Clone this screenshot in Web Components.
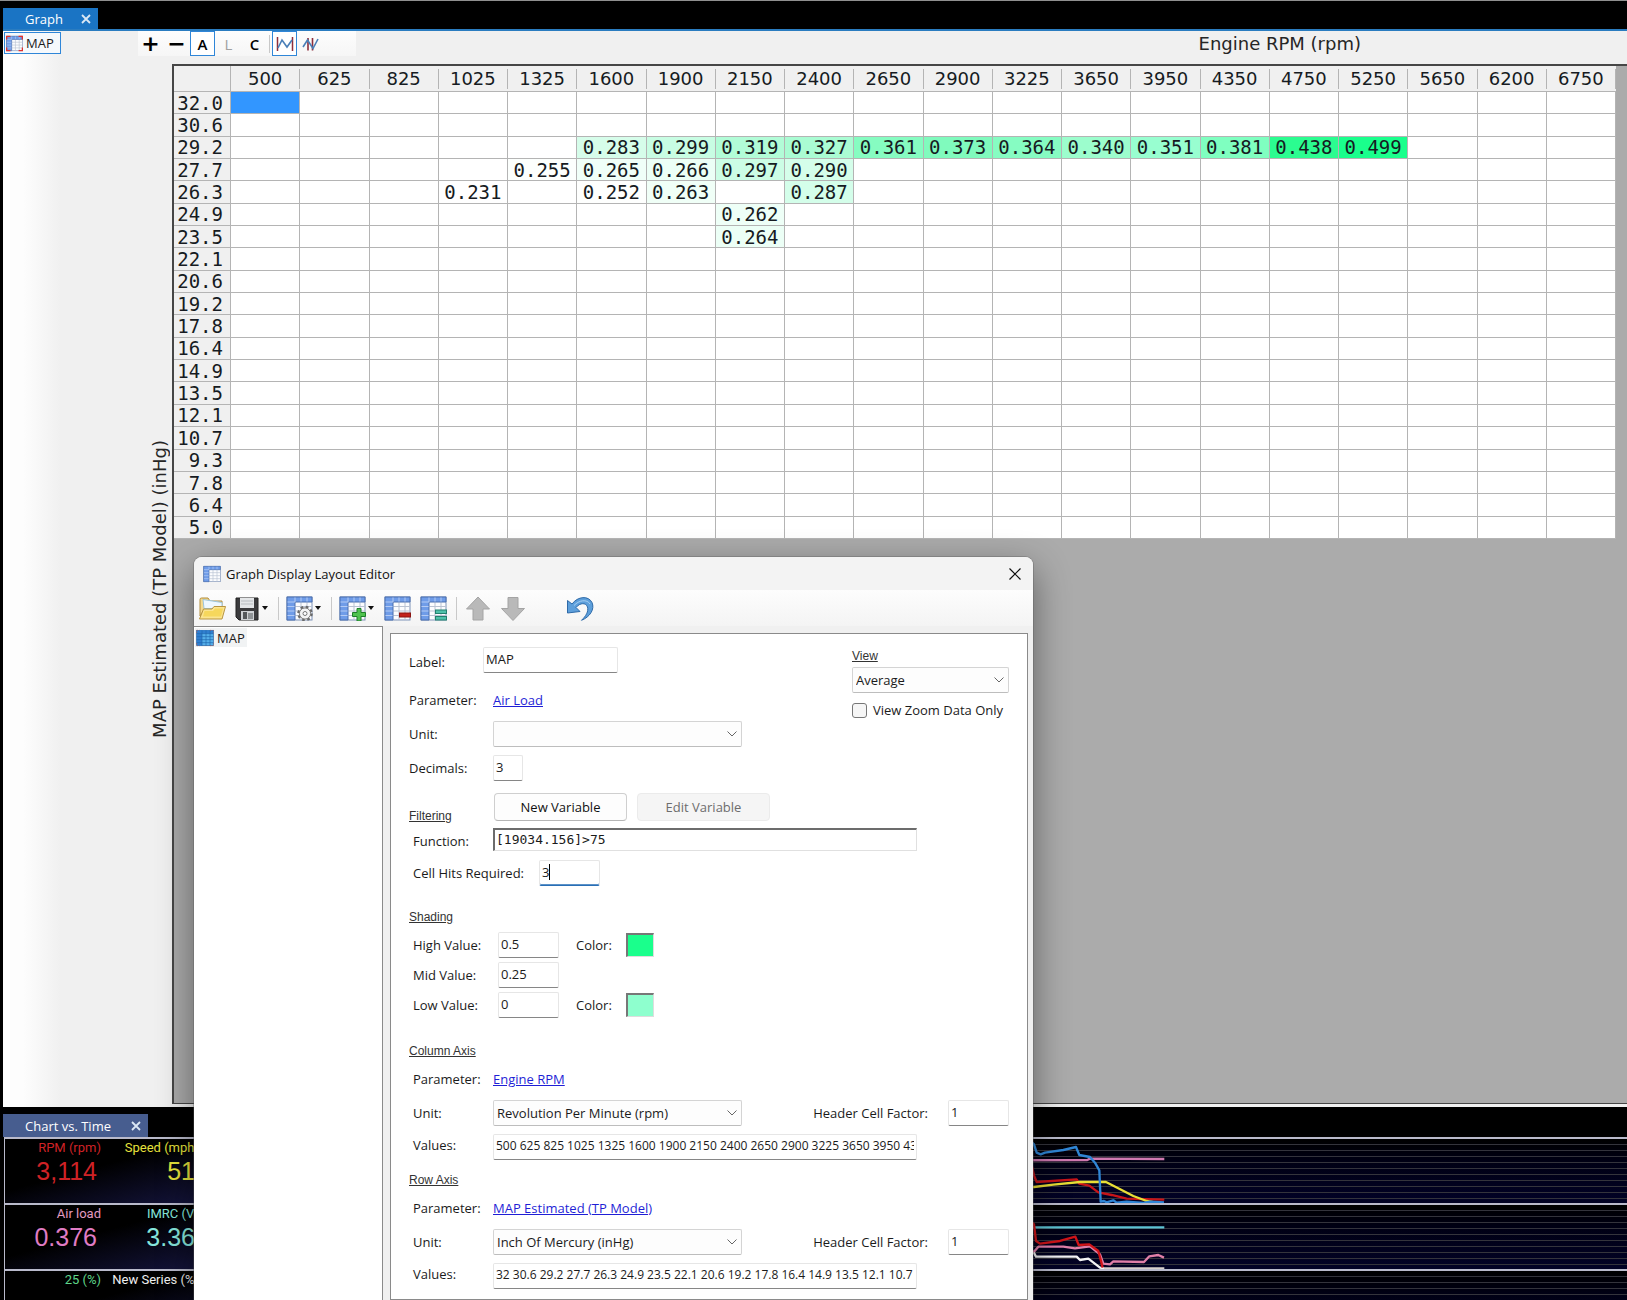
<!DOCTYPE html>
<html lang="en">
<head>
<meta charset="utf-8">
<title>Graph Display Layout Editor</title>
<style>
html, body { margin: 0; height: 100%; background: #000; overflow: hidden; }
body { font: 13px/18px "Open Sans", "Noto Sans", sans-serif; color: #1b1b1b; }
</style>
</head>
<body>
<scanner-app></scanner-app>

<script>
class Base extends HTMLElement {
  constructor() {
    super();
    const t = document.createElement('template');
    t.innerHTML = this.view();
    this.attachShadow({ mode: 'open' }).appendChild(t.content.cloneNode(true));
  }
}

/* ---------- icons ---------- */
const tableBody = `
  <rect x="1" y="1" width="25" height="23" fill="#fbfcfe" stroke="#7f93b8"/>
  <path d="M9.500 10.500H26M9.500 15H26M9.500 19.500H26M15 6.500V24M21 6.500V24" stroke="#b9c2d2" fill="none"/>
  <path d="M1 1h25v5H9v18H1z" fill="#6f9ce8" stroke="#4a6eae"/>
  <path d="M1.500 6H9M1.500 10.500h7M1.500 15h7M1.500 19.500h7M9 1.500V6M15 1.500v4M21 1.500v4" stroke="#b4cbf4" fill="none"/>`;
const ICONS = {
  table: ['0 0 27 25', tableBody],
  tableRed: ['0 0 27 25', tableBody + `<path d="M1 6V1h6M20 1h6v5M1 19v5h6M20 24h6v-5" fill="none" stroke="#e03030" stroke-width="2"/>`],
  tableSel: ['0 0 27 25', `<rect x="1" y="1" width="25" height="23" fill="#55b0ea" stroke="#2a5f9c"/><rect x="1" y="1" width="25" height="5" fill="#2f7fd0"/><rect x="1" y="1" width="8" height="23" fill="#2f7fd0"/><path d="M1 6h25M1 10.500h25M1 15h25M1 19.500h25M9 1v23M15 1v23M21 1v23" stroke="#1f66ad" fill="none"/><path d="M1 5V1h5M21 1h5v4M1 20v4h5M21 24h5v-4" fill="none" stroke="#b0564f" stroke-dasharray="2 2"/>`],
  gear: ['0 0 27 25', tableBody + `<circle cx="19" cy="17.500" r="6.500" fill="#f2f2f2" stroke="#6a6a6a" stroke-width="2.600" stroke-dasharray="2.600 2.500"/><circle cx="19" cy="17.500" r="5.600" fill="#f4f4f4" stroke="#777"/><circle cx="19" cy="17.500" r="2" fill="#fff" stroke="#777"/>`],
  plus: ['0 0 27 25', tableBody + `<path d="M18 12.500h4v4h4.500v4H22V25h-4v-4.500h-4.500v-4H18z" fill="#4fc24f" stroke="#1d7f2a"/>`],
  minus: ['0 0 27 25', tableBody + `<rect x="15.500" y="17" width="11" height="4" fill="#c3221c" stroke="#8c1410"/>`],
  equal: ['0 0 27 25', tableBody + `<rect x="15.500" y="14" width="11" height="3.500" fill="#4fc0aa" stroke="#23806e"/><rect x="15.500" y="20.500" width="11" height="3.500" fill="#4fc0aa" stroke="#23806e"/>`],
  folder: ['0 0 28 25', `<path d="M2 20V3.500Q2 2 3.500 2H10l2 3h12v6H8z" fill="#f5d98c" stroke="#b08c3c"/><path d="M5 3.500l19 3v6H6z" fill="#eef7fd" stroke="#9cc5dc"/><path d="M1.500 23L5.500 13H14l2-2.500h11.500L24 23z" fill="#fbe48f" stroke="#b8943f"/><path d="M6.500 15h8.500l2-2.500h8l-2 8H5z" fill="#f6d75c"/>`],
  save: ['0 0 25 25', `<path d="M1 2h22v22H4l-3-3z" fill="#3b3b3d" stroke="#222"/><rect x="5" y="2" width="14" height="10" fill="#e4e6e8"/><path d="M6 5h12M6 8h12" stroke="#b8bcc0"/><rect x="6" y="15" width="13" height="9" fill="#cfd2d5"/><rect x="8" y="16" width="4" height="7" fill="#55585b"/><rect x="13" y="17" width="5" height="6" fill="#8f9396"/>`],
  up: ['0 0 28 25', `<path d="M14 1L25.500 13H19v11H9V13H2.500z" fill="#b9b9b9" stroke="#a4a4a4"/>`],
  down: ['0 0 28 25', `<path d="M14 24.500L25.500 12.500H19v-11H9v11H2.500z" fill="#b9b9b9" stroke="#a4a4a4"/>`],
  undo: ['0 0 28 25', `<path d="M1.500 4.500v12.500l12.500-1.500-4-4c4-5 10-5 11.500-.5 1.200 4.500-1.500 9-6 13.300C24 21 29 13 26 6.500 22.500-.5 12 0 6 8z" fill="#5d9fdb" stroke="#2e6aa8"/><path d="M8 9.500C13 4 21 3 24 8" fill="none" stroke="#a6cff2"/>`],
  line: ['0 0 18 14', `<path d="M1.500 0v14M16.500 0v14" stroke="#8e2f3c" stroke-width="1.500"/><path d="M2 11L6 3l5 7 5-7" fill="none" stroke="#4a7fb8" stroke-width="1.600"/>`],
  lines: ['0 0 18 14', `<path d="M6 1v12.500M10.500 1v12.500" stroke="#8e2f3c" stroke-width="1.600"/><path d="M1 10l4.500-7 5.500 8.500L16 2" fill="none" stroke="#4a7fb8" stroke-width="1.600"/>`],
  close: ['0 0 12 12', `<path d="M.5.500l11 11M11.500.500l-11 11" stroke="currentColor" stroke-width="1.200"/>`],
  cross: ['0 0 10 10', `<path d="M1 1l8 8M9 1L1 9" stroke="currentColor" stroke-width="1.800"/>`],
  chevron: ['0 0 10 6', `<path d="M.5.500L5 5 9.500.500" fill="none" stroke="#666"/>`],
};
class UiIcon extends Base {
  view() {
    const [vb, art] = ICONS[this.getAttribute('name')];
    const [, , w, h] = vb.split(' ');
    const size = this.getAttribute('size');
    return `<style>:host{display:inline-flex;flex:none}svg{display:block}</style>
      <svg aria-hidden="true" viewBox="${vb}" width="${size || w}" height="${size || h}">${art}</svg>`;
  }
}

/* ---------- docking tab ---------- */
class DockTab extends Base {
  view() {
    return `<style>
      :host{display:flex;align-items:center;justify-content:space-between;color:#fff;background:var(--tab,#1a74c4);
        box-sizing:border-box;padding:0 7px 0 22px;line-height:20px}
      button{all:unset;display:flex;color:#dbe8f5}
    </style><span><slot></slot></span><button aria-label="Close"><ui-icon name="cross"></ui-icon></button>`;
  }
}

/* ---------- histogram table ---------- */
const RPM = [500,625,825,1025,1325,1600,1900,2150,2400,2650,2900,3225,3650,3950,4350,4750,5250,5650,6200,6750];
const MAPS = ['32.0','30.6','29.2','27.7','26.3','24.9','23.5','22.1','20.6','19.2','17.8','16.4','14.9','13.5','12.1','10.7','9.3','7.8','6.4','5.0'];
const DATA = {
  '29.2': { 1600:['0.283','#d6fdea'],1900:['0.299','#c8fde3'],2150:['0.319','#b2fcd7'],2400:['0.327','#aafcd3'],2650:['0.361','#86fcc1'],
    2900:['0.373','#80fabd'],3225:['0.364','#86fcc2'],3650:['0.340','#9cfdcd'],3950:['0.351','#98fed0'],4350:['0.381','#7fffc0'],4750:['0.438','#2bfc90'],5250:['0.499','#1aff8c'] },
  '27.7': { 1325:['0.255','#fcfffd'],1600:['0.265','#f0fff8'],1900:['0.266','#ecfff6'],2150:['0.297','#ccfde5'],2400:['0.290','#d5feea'] },
  '26.3': { 1025:['0.231','#ffffff'],1600:['0.252','#fefffe'],1900:['0.263','#f0fff7'],2400:['0.287','#d4feea'] },
  '24.9': { 2150:['0.262','#eefff7'] },
  '23.5': { 2150:['0.264','#ecfff6'] },
};
class HistogramTable extends Base {
  view() {
    const head = RPM.map(r => `<th scope="col"><span>${r}</span></th>`).join('');
    const rows = MAPS.map((m, i) => `<tr><th scope="row">${m}</th>` + RPM.map((r, j) => {
      const d = (DATA[m] || {})[r];
      if (i === 0 && j === 0) return '<td class="sel"></td>';
      return d ? `<td style="background:${d[1]}">${d[0]}</td>` : '<td></td>';
    }).join('') + '</tr>').join('');
    return `<style>
      :host{display:block}
      table{width:100%;height:473px;table-layout:fixed;border-collapse:separate;border-spacing:0;background:#fff;
        font:19px/20px "DejaVu Sans Mono","Liberation Mono",monospace;color:#161b22}
      td,th{padding:0;font-weight:400;text-align:center;border:0 solid #b4b4b4;border-width:0 1px 1px 0;box-sizing:border-box}
      thead th{height:26px;background:#f0f0f0;border-right:0;font:18px/20px "DejaVu Sans","Noto Sans",sans-serif}
      thead th:first-child{width:57px;border-right:1px solid #b4b4b4}
      thead span{display:block;border-right:1px solid #b4b4b4}
      tbody th{background:#f0f0f0;text-align:right;padding-right:7px}
      .sel{background:#3296ff}
    </style>
    <table aria-label="MAP"><thead><tr><th></th>${head}</tr></thead><tbody>${rows}</tbody></table>`;
  }
}

/* ---------- graph pane ---------- */
class GraphPane extends Base {
  view() {
    return `<style>
      :host{display:flex;background:linear-gradient(90deg,#fdfdfd 20px,#f0f0f0 58px);min-height:0}
      .side{width:135px;flex:none;padding:1px;box-sizing:border-box}
      .item{all:unset;box-sizing:border-box;display:flex;align-items:center;gap:3px;width:57px;height:22px;padding-left:1px;
        border:1px solid #2f86d8;background:#f6f9fc}
      .main{flex:1;min-width:0;display:flex;flex-direction:column}
      .top{display:flex;justify-content:space-between;align-items:center;height:33px}
      .bar{display:flex;align-items:center;gap:1px;width:218px;height:25px;margin-bottom:8px;background:linear-gradient(#fdfdfd,#f6f6f6);align-self:flex-end}
      .bar button{all:unset;box-sizing:border-box;width:25px;height:25px;display:flex;align-items:center;justify-content:center;
        font:600 15px/20px "Open Sans",sans-serif;color:#000}
      .bar .big{font:700 22px/20px "DejaVu Sans",sans-serif}
      .bar .on{border:1px solid #2f86d8;background:#fff}
      .bar .off{color:#a0a0a0;font-weight:400}
      .bar i{width:1px;height:18px;background:#c8c8c8;margin:0 1px}
      .title{font:18px/22px "DejaVu Sans",sans-serif;padding:0 266px 8px 0;color:#262626}
      .body{flex:1;min-height:0;display:flex}
      .axis{width:34px;display:flex;align-items:center;justify-content:center;flex:none;box-sizing:border-box;padding:6px 0 0 10px}
      .axis span{writing-mode:vertical-rl;transform:rotate(180deg);font:18px/22px "DejaVu Sans",sans-serif;color:#262626;white-space:nowrap}
      .canvas{flex:1;min-width:0;background:#ababab;border:2px solid #464646;border-width:2px 0 1px 2px;margin-bottom:3px;padding-right:11px}
    </style>
    <div class="side"><button class="item"><ui-icon name="tableRed" size="17"></ui-icon>MAP</button></div>
    <div class="main">
      <div class="top">
        <div class="bar"><button class="big">+</button><button class="big">−</button><button class="on">A</button><button class="off">L</button><button>C</button><i></i>
          <button class="on" aria-label="Line"><ui-icon name="line"></ui-icon></button><button aria-label="Lines"><ui-icon name="lines"></ui-icon></button></div>
        <div class="title">Engine RPM (rpm)</div>
      </div>
      <div class="body">
        <div class="axis"><span>MAP Estimated (TP Model) (inHg)</span></div>
        <div class="canvas"><histogram-table></histogram-table></div>
      </div>
    </div>`;
  }
}

/* ---------- chart pane ---------- */
class GaugeTile extends Base {
  view() {
    return `<style>
      :host{display:block;width:98px;flex:none;text-align:right;white-space:nowrap;font-family:Roboto,"Liberation Sans",sans-serif}
      .l{font-size:13px;line-height:17px;padding-right:2px;color:var(--l)}
      .v{font:25px/30px "Liberation Sans",sans-serif;padding-right:6px;color:var(--v,var(--l))}
    </style><div class="l">${this.getAttribute('label')}</div><div class="v"><slot></slot></div>`;
  }
}
const p = (c, pts, w = 7) => `<polyline points="${pts}" fill="none" stroke="${c}" stroke-width="${w}" stroke-linejoin="round"/>`;
const TRACES = {
  a: `<g transform="translate(801 -58) scale(.3333)">` +
    p('#cf79b0', '0,238 262,237 270,233 493,234') +
    p('#c81418', '92,240 102,283 110,303 230,295 238,308 268,314 295,334 335,342 380,353 493,356') +
    p('#e9df35', '92,318 102,318 160,311 240,303 318,303 400,345 440,360 472,366') +
    p('#2f86d6', '92,180 102,190 110,215 122,220 135,215 190,207 228,198 238,222 270,228 285,245 298,268 302,362 312,360 320,364 340,358 350,365 380,362 430,366 450,362 492,364') + `</g>`,
  b: `<g transform="translate(801 -124) scale(.3333)">` +
    p('#5cc3d4', '0,439 493,439') +
    p('#d8d0cc', '305,562 493,562') +
    p('#f4f4f4', '92,512 102,515 108,527 230,527 240,537 265,533 300,560 312,562') +
    p('#e07fa8', '92,514 104,510 115,497 190,497 225,502 270,496 300,520 310,548 330,550 340,541 432,543 448,526 475,522 492,530') +
    p('#d01418', '92,420 102,430 108,480 120,488 180,480 226,467 236,492 268,490 295,510 303,540 308,560') + `</g>`,
};
class ChartRow extends Base {
  view() {
    return `<style>
      :host{display:flex;height:64px;flex:none;border-top:2px solid #b9bacb;border-left:1px solid #b9bacb;overflow:hidden;background:#000}
      .tiles{display:flex;width:194px;flex:none;background:linear-gradient(165deg,#000 45%,#14143c)}
      .plot{flex:1;min-width:0;background:repeating-linear-gradient(transparent 0 5px,#34343c 5px 6px),linear-gradient(#000,#000014 35%,#020226)}
      svg{display:block;width:100%;height:64px}
    </style><div class="tiles"><slot></slot></div><div class="plot"><svg aria-hidden="true">${TRACES[this.getAttribute('traces')] || ''}</svg></div>`;
  }
}
class ChartPane extends Base {
  view() {
    return `<style>
      :host{display:block;padding-top:7px;height:186px;overflow:hidden;background:#000}
      dock-tab{width:145px;height:23px;--tab:#475d8f}
      .rows{display:flex;flex-direction:column;margin-left:1px}
    </style>
    <dock-tab>Chart vs. Time</dock-tab>
    <div class="rows">
      <chart-row traces="a"><gauge-tile label="RPM (rpm)" style="--l:#cf2226">3,114</gauge-tile><gauge-tile label="Speed (mph)" style="--l:#e6e23c">51</gauge-tile></chart-row>
      <chart-row traces="b"><gauge-tile label="Air load" style="--l:#e39ac0;--v:#e07cc4">0.376</gauge-tile><gauge-tile label="IMRC (V)" style="--l:#86e6dc">3.36</gauge-tile></chart-row>
      <chart-row><gauge-tile label="25 (%)" style="--l:#5fd68a"></gauge-tile><gauge-tile label="New Series (%)" style="--l:#f0f0f0"></gauge-tile></chart-row>
    </div>`;
  }
}

/* ---------- editor dialog ---------- */
class ToolButton extends Base {
  view() {
    return `<style>:host{display:flex;flex:none;width:var(--w,28px)}
      button{all:unset;display:flex;align-items:center;gap:2px}
      b{width:0;height:0;border:solid transparent;border-width:4px 3px 0;border-top-color:#111}
    </style><button aria-label="${this.getAttribute('icon')}"><ui-icon name="${this.getAttribute('icon')}"></ui-icon>${this.hasAttribute('menu') ? '<b></b>' : ''}</button>`;
  }
}
class SelectBox extends Base {
  view() {
    return `<style>:host{display:block;position:relative}
      ::slotted(select){appearance:none;display:block;box-sizing:border-box;width:100%;height:26px;margin:0;padding:0 3px;border:1px solid #d4d4d4;
        border-bottom-color:#bdbdbd;border-radius:2px;background:#fdfdfd;font:inherit;color:inherit}
      ui-icon{position:absolute;right:5px;top:10px;pointer-events:none}
    </style><slot></slot><ui-icon name="chevron"></ui-icon>`;
  }
}
class FormRow extends Base {
  view() {
    return `<style>
      :host{display:flex;align-items:center;height:25px;margin-top:9px}
      :host([tight]){margin-top:5px}
      .lab{width:84px;flex:none;box-sizing:border-box;white-space:nowrap}
      :host([indent]) .lab{padding-left:4px}
      :host([narrow]) .lab{width:74px}
      :host([mid]) .lab{width:89px}
      :host([wide]) .lab{width:130px}
      :host([raised]) .lab{padding-bottom:4px}
      :host([lowered]) .lab{padding-top:4px}
      .end{margin-left:auto;display:flex;align-items:center;gap:20px}
    </style><div class="lab"><slot name="label"></slot></div><slot></slot><div class="end"><slot name="end"></slot></div>`;
  }
}
class LayoutEditor extends Base {
  view() {
    return `<style>
      :host{display:flex;flex-direction:column;box-sizing:border-box;background:#f0f0f0;border-radius:8px 8px 0 0;overflow:hidden;
        box-shadow:0 0 0 1px rgba(90,90,90,.35),0 12px 36px rgba(0,0,0,.45)}
      header{display:flex;align-items:center;height:33px;padding:0 12px 0 9px;gap:5px;background:#f3f3f3;color:#111}
      header button{all:unset;margin-left:auto;display:flex}
      .tools{display:flex;align-items:center;gap:7px;height:36px;padding-left:4px;background:linear-gradient(#fdfdfd,#f4f4f4)}
      .tools i{width:1px;height:23px;background:#c9c9c9}
      .split{flex:1;min-height:0;display:flex;gap:7px;padding:0 5px 0 0}
      .tree{width:189px;box-sizing:border-box;background:#fff;border:1px solid #8a8a8a;border-width:1px 1px 0 0;padding:1px}
      .tree span{display:inline-flex;align-items:center;gap:3px;background:#f1f3f4;padding:0 2px 0 1px;height:19px}
      form{flex:1;margin:7px 0 0;box-sizing:border-box;background:#fff;border:1px solid #8a8a8a;padding:13px 18px 10px}
      .head{display:flex;justify-content:space-between}
      .head form-row:first-child{margin:0 0 15px}
      .head form-row:nth-child(2){margin-top:0}
      .left{width:334px}
      aside{width:157px}
      h3{margin:0;font:12px/19px "Liberation Sans",sans-serif;text-decoration:underline;color:#333}
      h3.s1{margin-top:23px} h3.s2{margin-top:25px} h3.s3{margin-top:12px}
      aside select-box{margin-top:1px}
      .check{display:flex;align-items:center;gap:6px;margin-top:8px}
      .check input{appearance:none;width:15px;height:15px;margin:0;border:1px solid #777;border-radius:3px;background:#f6f6f6}
      a{color:#1f1fd6;text-decoration:underline}
      input[type=text]{box-sizing:border-box;height:26px;margin:0;padding:0 2px 2px;border:1px solid #e6e6e6;border-bottom:1px solid #868686;
        border-radius:2px;background:#fff;font:inherit;color:inherit;outline:0}
      .w134{width:135px} .w29{width:30px} .w60{width:61px} .w248{width:249px}
      input.list{width:424px;font-size:12px}
      input.fn{width:424px;height:23px;border:1px solid #e0e0e0;border-top:2px solid #6c6c6c;border-left:2px solid #6c6c6c;border-radius:0;
        font:13px/18px "DejaVu Sans Mono",monospace;padding:0 1px 2px;align-self:flex-end}
      .caret{position:relative;display:flex}
      .caret input{border-bottom-color:#2a6fb5;box-shadow:inset 0 -1px #5c92c8}
      .caret::after{content:"";position:absolute;left:10px;top:4px;width:1px;height:16px;background:#000}
      .filter{display:flex;align-items:flex-end;height:32px;margin-top:9px}
      .filter h3{width:85px;margin-bottom:-5px}
      .filter button{box-sizing:border-box;width:133px;height:28px;margin-right:10px;border:1px solid #cfcfcf;border-bottom-color:#b5b5b5;border-radius:4px;background:#fdfdfd;font:inherit;color:#111;padding:0}
      .filter button:disabled{background:#f5f5f5;border-color:#ebebeb;color:#6d6d6d}
      .clr{margin-left:17px;width:50px}
      .sw{all:unset;box-sizing:border-box;width:28px;height:24px;border:2px solid #777;border-width:2px 1px 1px 2px;border-right-color:#ddd;border-bottom-color:#ddd}
    </style>
    <header><ui-icon name="table" size="18"></ui-icon>Graph Display Layout Editor<button aria-label="Close"><ui-icon name="close"></ui-icon></button></header>
    <div class="tools">
      <tool-button icon="folder" style="--w:30px"></tool-button><tool-button icon="save" menu style="--w:36px"></tool-button><i></i>
      <tool-button icon="gear" menu style="--w:38px"></tool-button><i></i>
      <tool-button icon="plus" menu style="--w:38px"></tool-button><tool-button icon="minus" style="--w:29px"></tool-button><tool-button icon="equal" style="--w:29px"></tool-button><i></i>
      <tool-button icon="up"></tool-button><tool-button icon="down"></tool-button><tool-button icon="undo" style="margin-left:32px"></tool-button>
    </div>
    <div class="split">
      <div class="tree"><span><ui-icon name="tableSel" size="18"></ui-icon>MAP</span></div>
      <form>
        <div class="head">
          <div class="left">
            <form-row narrow lowered><label slot="label" for="lbl">Label:</label><input type="text" id="lbl" class="w134" value="MAP"></form-row>
            <form-row><span slot="label">Parameter:</span><a href="#">Air Load</a></form-row>
            <form-row><label slot="label" for="unit">Unit:</label><select-box class="w248"><select id="unit"><option></option></select></select-box></form-row>
            <form-row><label slot="label" for="dec">Decimals:</label><input type="text" id="dec" class="w29" value="3"></form-row>
          </div>
          <aside>
            <h3><label for="view">View</label></h3>
            <select-box><select id="view"><option>Average</option></select></select-box>
            <div class="check"><input type="checkbox" id="zoom"><label for="zoom">View Zoom Data Only</label></div>
          </aside>
        </div>
        <div class="filter"><h3>Filtering</h3><button type="button">New Variable</button><button type="button" disabled>Edit Variable</button></div>
        <form-row tight indent lowered><label slot="label" for="fn">Function:</label><input type="text" id="fn" class="fn" value="[19034.156]&gt;75"></form-row>
        <form-row indent wide><label slot="label" for="hits">Cell Hits Required:</label><div class="caret"><input type="text" id="hits" class="w60" value="3"></div></form-row>
        <h3 class="s1">Shading</h3>
        <form-row tight indent mid><label slot="label" for="hi">High Value:</label><input type="text" id="hi" class="w60" value="0.5"><label class="clr" for="hic">Color:</label><button type="button" id="hic" class="sw" style="background:#1aff8c"></button></form-row>
        <form-row tight indent mid><label slot="label" for="mi">Mid Value:</label><input type="text" id="mi" class="w60" value="0.25"></form-row>
        <form-row tight indent mid><label slot="label" for="lo">Low Value:</label><input type="text" id="lo" class="w60" value="0"><label class="clr" for="loc">Color:</label><button type="button" id="loc" class="sw" style="background:#8effce"></button></form-row>
        <h3 class="s2">Column Axis</h3>
        <form-row tight indent><span slot="label">Parameter:</span><a href="#">Engine RPM</a></form-row>
        <form-row indent><label slot="label" for="cu">Unit:</label><select-box class="w248"><select id="cu"><option>Revolution Per Minute (rpm)</option></select></select-box><label slot="end" for="cf">Header Cell Factor:</label><input slot="end" type="text" id="cf" class="w60" value="1"></form-row>
        <form-row indent raised><label slot="label" for="cv">Values:</label><input type="text" id="cv" class="list" value="500 625 825 1025 1325 1600 1900 2150 2400 2650 2900 3225 3650 3950 4350 4750 5250 5650 6200 6750"></form-row>
        <h3 class="s3">Row Axis</h3>
        <form-row tight indent><span slot="label">Parameter:</span><a href="#">MAP Estimated (TP Model)</a></form-row>
        <form-row indent><label slot="label" for="ru">Unit:</label><select-box class="w248"><select id="ru"><option>Inch Of Mercury (inHg)</option></select></select-box><label slot="end" for="rf">Header Cell Factor:</label><input slot="end" type="text" id="rf" class="w60" value="1"></form-row>
        <form-row indent raised><label slot="label" for="rv">Values:</label><input type="text" id="rv" class="list" value="32 30.6 29.2 27.7 26.3 24.9 23.5 22.1 20.6 19.2 17.8 16.4 14.9 13.5 12.1 10.7"></form-row>
      </form>
    </div>`;
  }
}

/* ---------- application shell ---------- */
class ScannerApp extends Base {
  view() {
    return `<style>
      :host{display:flex;flex-direction:column;height:100vh;position:relative;overflow:hidden;box-sizing:border-box;border-top:1px solid #8f8f8f;padding-left:3px}
      nav{height:28px;flex:none;display:flex;align-items:flex-end;border-bottom:2px solid #2a7cc0}
      nav dock-tab{width:95px;height:21px}
      graph-pane{flex:1}
      chart-pane{flex:none}
      /* floating window on the workspace */
      layout-editor{position:absolute;left:194px;top:556px;bottom:0;width:839px}
    </style>
    <nav><dock-tab>Graph</dock-tab></nav>
    <graph-pane></graph-pane>
    <chart-pane></chart-pane>
    <layout-editor role="dialog" aria-label="Graph Display Layout Editor"></layout-editor>`;
  }
}
customElements.define('ui-icon', UiIcon);
customElements.define('dock-tab', DockTab);
customElements.define('histogram-table', HistogramTable);
customElements.define('graph-pane', GraphPane);
customElements.define('gauge-tile', GaugeTile);
customElements.define('chart-row', ChartRow);
customElements.define('chart-pane', ChartPane);
customElements.define('tool-button', ToolButton);
customElements.define('select-box', SelectBox);
customElements.define('form-row', FormRow);
customElements.define('layout-editor', LayoutEditor);
customElements.define('scanner-app', ScannerApp);
</script>
</body>
</html>
